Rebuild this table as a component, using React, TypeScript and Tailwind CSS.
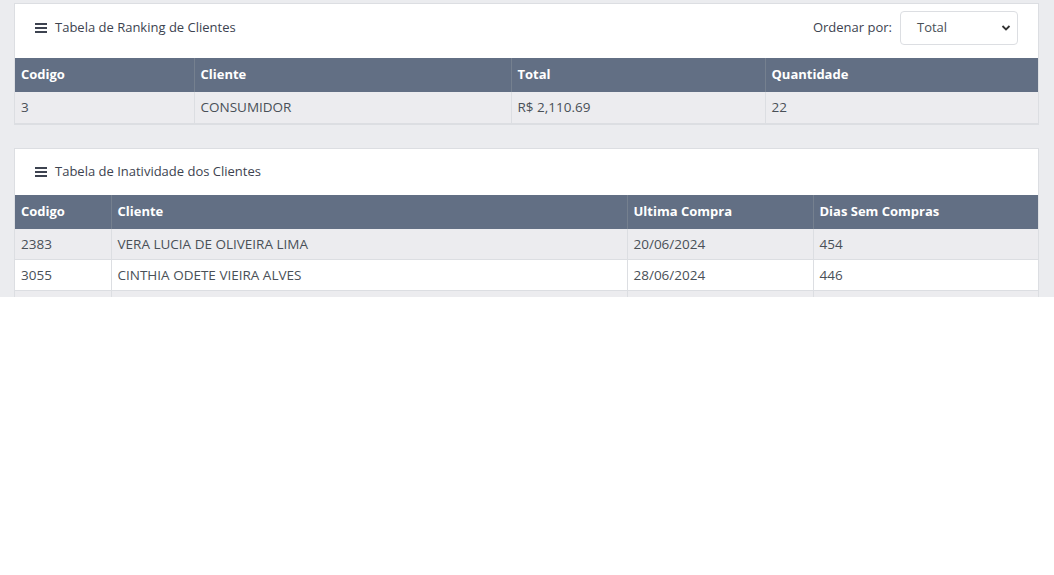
import React from "react";

const Burger = () => (
  <svg width="12" height="10" viewBox="0 0 12 10" className="shrink-0">
    <rect x="0" y="0" width="12" height="2" fill="#3d4350" />
    <rect x="0" y="4" width="12" height="2" fill="#3d4350" />
    <rect x="0" y="8" width="12" height="2" fill="#3d4350" />
  </svg>
);

type Col = { label: string; w: string };

function Table({ cols, rows }: { cols: Col[]; rows: string[][] }) {
  return (
    <table className="w-full border-collapse table-fixed">
      <colgroup>
        {cols.map((c, i) => (
          <col key={i} style={{ width: c.w }} />
        ))}
      </colgroup>
      <thead>
        <tr className="bg-[#626f84] h-[34px]">
          {cols.map((c, i) => (
            <th
              key={i}
              className="text-left font-bold text-white text-[13px] px-[6px] border-l border-[#75808f] first:border-l-0"
            >
              {c.label}
            </th>
          ))}
        </tr>
      </thead>
      <tbody>
        {rows.map((r, ri) => (
          <tr
            key={ri}
            className={`h-[31px] ${ri % 2 === 0 ? "bg-[#ececef]" : "bg-white"} border-b border-[#dcdee2]`}
          >
            {r.map((v, i) => (
              <td
                key={i}
                className="text-[13.5px] text-[#495057] px-[6px] border-l border-[#dcdee2] first:border-l-0"
              >
                {v}
              </td>
            ))}
          </tr>
        ))}
      </tbody>
    </table>
  );
}

export default function App() {
  return (
    <div className="w-[1054px] bg-white" style={{ fontFamily: '"Open Sans", sans-serif' }}>
      <div className="h-[297px] overflow-hidden bg-[#ebecef] pt-[3px] pl-[14px] pr-[15px]">
        <div className="bg-white border border-[#dcdee2]">
          <div className="h-[54px] flex items-center justify-between pl-[20px] pr-[20px] pb-[6px]">
            <div className="flex items-center gap-[8px] text-[13px] text-[#3d4350]">
              <Burger />
              <span>Tabela de Ranking de Clientes</span>
            </div>
            <div className="flex items-center gap-[8px]">
              <span className="text-[13px] text-[#3d4350]">Ordenar por:</span>
              <div className="w-[118px] h-[34px] border border-[#dcdee2] rounded-[4px] flex items-center justify-between pl-[16px] pr-[6px] text-[13px] text-[#495057] bg-white">
                <span>Total</span>
                <svg width="10" height="8" viewBox="0 0 10 8">
                  <path d="M1.5 2 L5 5.5 L8.5 2" stroke="#333" strokeWidth="1.8" fill="none" />
                </svg>
              </div>
            </div>
          </div>
          <Table
            cols={[
              { label: "Codigo", w: "179px" },
              { label: "Cliente", w: "317px" },
              { label: "Total", w: "254px" },
              { label: "Quantidade", w: "auto" },
            ]}
            rows={[["3", "CONSUMIDOR", "R$ 2,110.69", "22"]]}
          />
        </div>
        <div className="mt-[23px] bg-white border border-[#dcdee2]">
          <div className="h-[46px] flex items-center pl-[20px]">
            <div className="flex items-center gap-[8px] text-[13px] text-[#3d4350]">
              <Burger />
              <span>Tabela de Inatividade dos Clientes</span>
            </div>
          </div>
          <Table
            cols={[
              { label: "Codigo", w: "96px" },
              { label: "Cliente", w: "516px" },
              { label: "Ultima Compra", w: "186px" },
              { label: "Dias Sem Compras", w: "auto" },
            ]}
            rows={[
              ["2383", "VERA LUCIA DE OLIVEIRA LIMA", "20/06/2024", "454"],
              ["3055", "CINTHIA ODETE VIEIRA ALVES", "28/06/2024", "446"],
              ["", "", "", ""],
            ]}
          />
        </div>
      </div>
      <div className="h-[278px] bg-white" />
    </div>
  );
}
